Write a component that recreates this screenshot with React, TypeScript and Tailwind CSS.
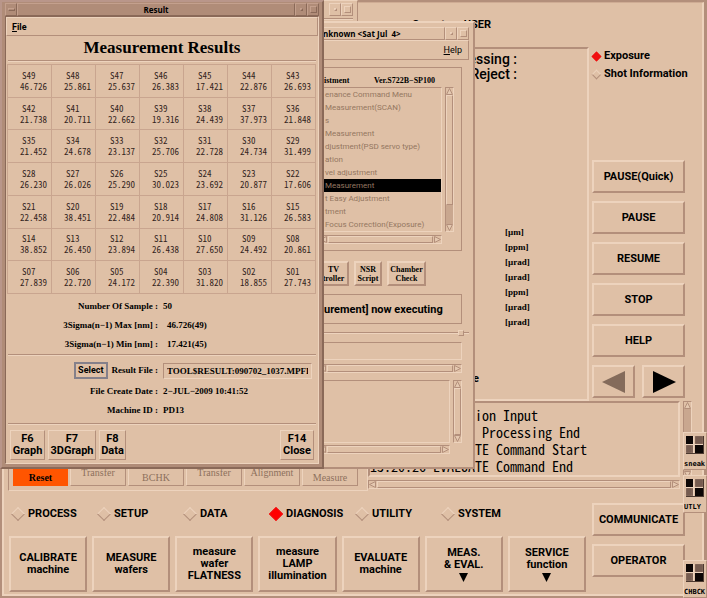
import type { ReactNode } from 'react';

const raised =
  'border-2 border-t-[#edd3bd] border-l-[#edd3bd] border-r-[#b38f7b] border-b-[#b38f7b]';
const raisedThin =
  'border border-t-[#edd3bd] border-l-[#edd3bd] border-r-[#b38f7b] border-b-[#b38f7b]';
const sunken =
  'border border-t-[#b38f7b] border-l-[#b38f7b] border-r-[#edd3bd] border-b-[#edd3bd]';
const framed = 'border border-[#b38f7b]';
const etched = 'border-t border-t-[#b38f7b] border-b border-b-[#edd3bd]';

const sans = "font-['Roboto','Liberation_Sans',sans-serif]";
const serif = "font-['Liberation_Serif','Times_New_Roman',serif]";
const mono = "font-['Noto_Sans_Mono_CJK_JP','Noto_Sans_CJK_JP',monospace]";

const samples = [
  ['46.726', '25.861', '25.637', '26.383', '17.421', '22.876', '26.693'],
  ['21.738', '20.711', '22.662', '19.316', '24.439', '37.973', '21.848'],
  ['21.452', '24.678', '23.137', '25.706', '22.728', '24.734', '31.499'],
  ['26.230', '26.026', '25.290', '30.023', '23.692', '20.877', '17.606'],
  ['22.458', '38.451', '22.484', '20.914', '24.808', '31.126', '26.583'],
  ['38.852', '26.450', '23.894', '26.438', '27.650', '24.492', '20.861'],
  ['27.839', '22.720', '24.172', '22.390', '31.820', '18.855', '27.743'],
];

const commands = [
  'enance Command Menu',
  'Measurement(SCAN)',
  's',
  'Measurement',
  'djustment(PSD servo type)',
  'ation',
  'vel adjustment',
  'Measurement',
  't Easy Adjustment',
  'tment',
  'Focus Correction(Exposure)',
];

const units = ['[µm]', '[ppm]', '[µrad]', '[µrad]', '[ppm]', '[µrad]', '[µrad]'];

const tasks = [
  { lines: ['CALIBRATE', 'machine'] },
  { lines: ['MEASURE', 'wafers'] },
  { lines: ['measure', 'wafer', 'FLATNESS'] },
  { lines: ['measure', 'LAMP', 'illumination'] },
  { lines: ['EVALUATE', 'machine'] },
  { lines: ['MEAS.', '& EVAL.'], more: true },
  { lines: ['SERVICE', 'function'], more: true },
];

const menus = ['PROCESS', 'SETUP', 'DATA', 'DIAGNOSIS', 'UTILITY', 'SYSTEM'];

function Lines({ lines }: { lines: string[] }) {
  return (
    <>
      {lines.map((line) => (
        <span key={line} className="block">
          {line}
        </span>
      ))}
    </>
  );
}

function HScroll({ className = '' }: { className?: string }) {
  return (
    <div className={`flex h-[9px] items-stretch gap-px ${sunken} ${className}`}>
      <svg viewBox="0 0 7 7" className="w-[7px]">
        <path d="M6.5 .5L.5 3.5l6 3z" fill="#e4c8b0" stroke="#b38f7b" />
      </svg>
      <div className={`flex-1 ${raisedThin}`} />
      <svg viewBox="0 0 7 7" className="w-[7px]">
        <path d="M.5 .5l6 3-6 3z" fill="#e4c8b0" stroke="#b38f7b" />
      </svg>
    </div>
  );
}

function VScroll({ thumb = 'flex-1', className = '' }: { thumb?: string; className?: string }) {
  return (
    <div className={`flex w-[9px] shrink-0 flex-col bg-[#c9a78f] ${sunken} ${className}`}>
      <svg viewBox="0 0 7 7" className="h-[7px] bg-[#dfc0a6]">
        <path d="M.5 6.5L3.5 .5l3 6z" fill="#e4c8b0" stroke="#b38f7b" />
      </svg>
      <div className={`bg-[#dfc0a6] ${thumb} ${raisedThin}`} />
      <svg viewBox="0 0 7 7" className="mt-auto h-[7px] bg-[#dfc0a6]">
        <path d="M.5 .5h6l-3 6z" fill="#e4c8b0" stroke="#b38f7b" />
      </svg>
    </div>
  );
}

function WindowButtons({ dark = false }: { dark?: boolean }) {
  const tone = dark
    ? 'border border-t-[#c4a08d] border-l-[#c4a08d] border-r-[#8a6958] border-b-[#8a6958]'
    : raisedThin;
  return (
    <>
      <button aria-label="Minimize" className={`flex w-[12px] items-center justify-center ${tone}`}>
        <span className={`size-[3px] ${tone}`} />
      </button>
      <button aria-label="Maximize" className={`flex w-[12px] items-center justify-center ${tone}`}>
        <span className={`size-[7px] ${tone}`} />
      </button>
    </>
  );
}

function SideButton({ children }: { children: ReactNode }) {
  return (
    <button className={`h-[33px] w-full whitespace-nowrap text-[11px] leading-[14px] font-bold ${raised}`}>
      {children}
    </button>
  );
}

function DesktopIcon({ label }: { label: string }) {
  return (
    <button
      className={`flex h-[38px] w-[24px] flex-col items-start justify-between overflow-hidden bg-[#dfc0a6] pt-[3px] ${raisedThin}`}
    >
      <svg viewBox="0 0 18 18" className="ml-[2px] size-[18px]">
        <path d="M0 0h7v8H0zM9 9h8v8H9z" fill="#0c0605" />
        <path d="M9 0h8v8H9zM0 9h7v8H0z" fill="#8b6f60" />
        <path d="M9 2h8M9 4h8M9 6h8M0 11h7M0 13h7M0 15h7M11 0v8M13 0v8M15 0v8M2 9v8M4 9v8" stroke="#5c473c" strokeWidth=".5" />
        <path d="M7.500 0v18M0 8.500h18" stroke="#edd3bd" fill="none" />
        <path d="M17.500 0v18M0 17.500h18" stroke="#4d3a30" fill="none" />
      </svg>
      <span className="font-['DejaVu_Sans_Mono',monospace] text-[7px] leading-[10px] font-bold">{label}</span>
    </button>
  );
}

function ResultWindow() {
  return (
    <section
      className={`absolute top-0 left-0 w-[324px] border-2 border-t-[#b9968a] border-l-[#b9968a] border-r-[#8a6958] border-b-[#8a6958] bg-[#b08c78] p-[3px] pt-px ${serif}`}
    >
      <header className="flex h-[13px]">
        <button
          aria-label="Window menu"
          className="flex w-[12px] items-center justify-center border border-t-[#c4a08d] border-l-[#c4a08d] border-r-[#8a6958] border-b-[#8a6958]"
        >
          <span className="h-[3px] w-[7px] border border-t-[#c4a08d] border-l-[#c4a08d] border-r-[#8a6958] border-b-[#8a6958]" />
        </button>
        <h2 className="flex-1 border border-t-[#c4a08d] border-l-[#c4a08d] border-r-[#8a6958] border-b-[#8a6958] text-center font-['Open_Sans',sans-serif] text-[8px] leading-[11px] font-bold">
          Result
        </h2>
        <WindowButtons dark />
      </header>

      <div className="border border-t-[#8a6958] border-l-[#8a6958] border-r-[#edd3bd] border-b-[#edd3bd] bg-[#dfc0a6]">
        <nav className={`flex h-[19px] items-center pl-[5px] ${raisedThin}`}>
          <button className={`text-[9px] leading-[12px] font-bold ${sans}`}>
            <u>F</u>ile
          </button>
        </nav>
        <h1 className="h-[24px] text-center text-[17px] leading-[24px] font-bold">Measurement Results</h1>

        <div className={`mx-[2px] ${etched}`} />
        <table
          className={`mt-[2px] ml-px h-[230px] w-[309px] table-fixed border-collapse border border-[#c9a58f] text-[9px] leading-[11px] text-[#33241c] ${mono}`}
        >
          <tbody>
            {samples.map((row, r) => (
              <tr key={r}>
                {row.map((value, c) => (
                  <td key={c} className="border border-[#c9a58f] pl-[12px] text-left align-middle">
                    <span className="block pl-[2px]">S{String(49 - r * 7 - c).padStart(2, '0')}</span>
                    <span className="block">{value}</span>
                  </td>
                ))}
              </tr>
            ))}
          </tbody>
        </table>

        <dl className="grid grid-cols-[152px_1fr] gap-x-[5px] pt-[3px] text-[9px] leading-[19px] font-bold">
          <dt className="text-right">Number Of Sample :</dt>
          <dd>50</dd>
          <dt className="text-right">3Sigma(n−1) Max [nm] :</dt>
          <dd className="pl-[4px]">46.726(49)</dd>
          <dt className="text-right">3Sigma(n−1) Min [nm] :</dt>
          <dd className="pl-[4px]">17.421(45)</dd>
        </dl>
        <div className={`mx-[2px] ${etched}`} />

        <div className="grid grid-cols-[152px_1fr] items-center gap-x-[5px] pt-[5px] text-[9px] leading-[19px] font-bold">
          <div className="flex items-center justify-end gap-[4px]">
            <button
              className={`h-[17px] border-2 border-[#85808a] px-[2px] text-[9px] leading-[13px] font-bold ${sans}`}
            >
              Select
            </button>
            <label htmlFor="result-file">Result File :</label>
          </div>
          <input
            id="result-file"
            defaultValue="TOOL$RESULT:090702_1037.MPFF"
            className={`mr-[6px] h-[16px] min-w-0 px-[3px] text-[9px] leading-[13px] font-bold ${sunken}`}
          />
          <span className="pt-[2px] text-right">File Create Date :</span>
          <span className="pt-[2px]">2−JUL−2009 10:41:52</span>
          <span className="text-right">Machine ID :</span>
          <span>PD13</span>
        </div>
        <div className={`mx-[2px] mt-[3px] ${etched}`} />

        <footer className={`flex gap-[3px] px-[4px] pt-[5px] pb-[3px] text-[11px] leading-[12px] font-bold ${sans}`}>
          <button className={`h-[30px] w-[35px] ${raisedThin}`}>
            <Lines lines={['F6', 'Graph']} />
          </button>
          <button className={`h-[30px] w-[48px] ${raisedThin}`}>
            <Lines lines={['F7', '3DGraph']} />
          </button>
          <button className={`h-[30px] w-[27px] ${raisedThin}`}>
            <Lines lines={['F8', 'Data']} />
          </button>
          <button className={`ml-auto h-[30px] w-[34px] ${raisedThin}`}>
            <Lines lines={['F14', 'Close']} />
          </button>
        </footer>
      </div>
    </section>
  );
}

function MaintenanceWindow() {
  return (
    <section
      className={`absolute top-[21px] left-[316px] w-[159px] overflow-hidden bg-[#dfc0a6] pt-[4px] pr-[4px] pb-[13px] ${raised}`}
    >
      <header className="flex h-[13px]">
        <h2 className={`flex-1 pl-[4px] font-['Open_Sans',sans-serif] text-[8px] leading-[11px] font-bold whitespace-pre ${raisedThin}`}>
          nknown &lt;Sat Jul  4&gt;
        </h2>
        <WindowButtons />
      </header>
      <nav className={`flex h-[20px] items-center justify-end pr-[6px] ${raisedThin}`}>
        <button className={`text-[9px] leading-[12px] ${sans}`}>
          <u>H</u>elp
        </button>
      </nav>

      <div className="pr-[7px]">
        <div className={`mt-[7px] h-[184px] pt-[6px] pr-[7px] ${framed}`}>
          <div className={`flex justify-between pr-[19px] pl-[5px] text-[8px] leading-[13px] font-bold ${serif}`}>
            <span>istment</span>
            <span>Ver.S722B−SP100</span>
          </div>
          <div className="flex gap-[3px]">
            <ul className={`h-[145px] flex-1 text-[8px] leading-[13px] whitespace-nowrap text-[#947761] ${sunken} ${sans}`}>
              {commands.map((command, i) => (
                <li key={i} className={i === 7 ? 'h-[13px] bg-black pl-[5px]' : 'h-[13px] pl-[5px]'}>
                  {command}
                </li>
              ))}
            </ul>
            <VScroll thumb="h-[110px]" />
          </div>
          <HScroll className="mt-[3px] mr-[12px]" />
        </div>

        <div className={`mt-[10px] flex gap-[5px] text-[8px] leading-[9px] font-bold ${serif}`}>
          <button className={`h-[25px] w-[31px] ${raised}`}>
            <Lines lines={['TV', 'troller']} />
          </button>
          <button className={`h-[25px] w-[28px] ${raised}`}>
            <Lines lines={['NSR', 'Script']} />
          </button>
          <button className={`h-[25px] w-[39px] ${raised}`}>
            <Lines lines={['Chamber', 'Check']} />
          </button>
        </div>

        <p className={`mt-[8px] h-[30px] pl-[5px] text-[11px] leading-[29px] font-bold whitespace-nowrap ${framed} ${sans}`}>
          urement] now executing
        </p>
      </div>

      <div className="flex h-[18px] items-center">
        <div className={`flex-1 ${etched}`} />
        <div className={`size-[6px] bg-[#dfc0a6] ${raisedThin}`} />
        <div className={`w-[5px] ${etched}`} />
      </div>
      <div className="pr-[7px]">
        <div className={`h-[18px] ${sunken}`} />
        <HScroll className="mt-[4px]" />
        <div className="mt-[7px] flex gap-[3px]">
          <div className="flex-1">
            <div className={`h-[63px] ${sunken}`} />
            <HScroll className="mt-[2px]" />
          </div>
          <VScroll className="h-[63px]" />
        </div>
      </div>
    </section>
  );
}

function WaferStrip() {
  const cells = [
    { label: 'Transfer', pad: 'pb-[7px]' },
    { label: 'BCHK', pad: 'pb-[2px]' },
    { label: 'Transfer', pad: 'pb-[7px]' },
    { label: 'Alignment', pad: 'pb-[7px]' },
    { label: 'Measure', pad: 'pb-[2px]' },
  ];
  return (
    <div className={`flex w-[360px] gap-[2px] pt-[50px] pb-[4px] pl-[4px] ${sunken} ${serif}`}>
      <button className="flex w-[55px] flex-col items-center justify-end bg-[#ff5500] pb-[3px] text-[10px] leading-[10px] font-bold">
        Reset
      </button>
      {cells.map((cell, i) => (
        <button
          key={i}
          disabled
          className={`flex w-[56px] flex-col items-center justify-end text-[10px] leading-[10px] text-[#8d705d] ${raisedThin} ${cell.pad}`}
        >
          {cell.label}
        </button>
      ))}
    </div>
  );
}

export default function App() {
  return (
    <main className={`relative flex min-h-screen flex-col overflow-hidden bg-[#dfc0a6] text-black ${sans}`}>
      <div className="flex flex-1 flex-col border-2 border-r-[3px] border-[#b38f7b]">
        <div className="flex flex-1 flex-col border-t border-r-2 border-b-2 border-l-2 border-t-[#cfac94] border-r-[#edd3bd] border-b-[#edd3bd] border-l-[#edd3bd]">
          <div className="flex flex-1">
            {/* Process status */}
            <div className="flex flex-1 flex-col">
              <p className="h-[44px] pr-[98px] text-right text-[11px] leading-[43px] font-bold">Operator : USER</p>
              <div className="flex flex-1 flex-col border-t-2 border-r-2 border-b-2 border-t-[#b38f7b] border-r-[#edd3bd] border-b-[#edd3bd]">
                <p className="pt-[3px] pr-[70px] text-right text-[14px] leading-[15px] font-medium">
                  <span className="block">Processing :</span>
                  <span className="block">Reject :</span>
                </p>
                <ul className={`mt-[143px] ml-auto w-[82px] text-[9px] leading-[15px] font-bold ${serif}`}>
                  {units.map((unit, i) => (
                    <li key={i}>{unit}</li>
                  ))}
                </ul>
                <p className="mt-[42px] pr-[108px] text-right text-[11px] leading-[14px] font-bold">Mode</p>
              </div>
            </div>

            {/* Operator controls */}
            <div className="flex w-[113px] flex-col pr-[17px] pl-[3px]">
              <div className="pt-[44px] text-[11px] leading-[18px] font-bold whitespace-nowrap">
                <label className="flex items-center gap-[4px]">
                  <input
                    type="radio"
                    name="view"
                    defaultChecked
                    className={`ml-px size-[7px] shrink-0 rotate-45 appearance-none checked:border-[#f01010] checked:bg-[#f01010] ${raisedThin}`}
                  />
                  Exposure
                </label>
                <label className="flex items-center gap-[4px]">
                  <input
                    type="radio"
                    name="view"
                    className={`ml-px size-[7px] shrink-0 rotate-45 appearance-none checked:border-[#f01010] checked:bg-[#f01010] ${raisedThin}`}
                  />
                  Shot Information
                </label>
              </div>
              <div className="mt-[77px] flex flex-col gap-[8px]">
                <SideButton>PAUSE(Quick)</SideButton>
                <SideButton>PAUSE</SideButton>
                <SideButton>RESUME</SideButton>
                <SideButton>STOP</SideButton>
                <SideButton>HELP</SideButton>
                <div className="flex justify-between">
                  <button aria-label="Previous" className={`flex h-[33px] w-[43px] items-center justify-center ${raised}`}>
                    <svg viewBox="0 0 24 24" className="size-[24px]">
                      <path d="M0 12L23 1v22z" fill="#846b5b" />
                    </svg>
                  </button>
                  <button aria-label="Next" className={`flex h-[33px] w-[43px] items-center justify-center ${raised}`}>
                    <svg viewBox="0 0 24 24" className="size-[24px]">
                      <path d="M24 12L1 1v22z" fill="#000" />
                    </svg>
                  </button>
                </div>
              </div>
            </div>
          </div>

          {/* Log */}
          <div className="flex h-[90px] pr-[10px] pl-[4px]">
            <WaferStrip />
            <div className="flex min-w-0 flex-1 gap-[3px]">
              <div className="min-w-0 flex-1">
                <pre
                  className={`h-[76px] overflow-hidden border-2 border-t-[#b38f7b] border-l-[#b38f7b] border-r-[#edd3bd] border-b-[#edd3bd] pt-[4px] text-[14px] leading-[17px] ${mono}`}
                >
                  {'               ion Input\n'}
                  {'                Processing End\n'}
                  {'13:20:26 EVALUATE Command Start\n'}
                  {'13:20:26 EVALUATE Command End'}
                </pre>
                <HScroll className="mt-[3px]" />
              </div>
              <VScroll thumb="mt-auto h-[12px]" className="h-[78px]" />
            </div>
          </div>

          {/* Task menu */}
          <div className="flex pt-[11px] pr-[17px] pb-[2px] pl-[5px]">
            <div className="flex-1">
              <div className="flex h-[23px] items-center text-[11px] leading-[14px] font-bold">
                {menus.map((menu) => (
                  <label key={menu} className="flex w-[86px] items-center gap-[5px] whitespace-nowrap">
                    <input
                      type="radio"
                      name="menu"
                      defaultChecked={menu === 'DIAGNOSIS'}
                      className={`ml-[4px] size-[10px] shrink-0 rotate-45 appearance-none checked:border-[#f01010] checked:bg-[#ff0000] ${raisedThin}`}
                    />
                    {menu}
                  </label>
                ))}
              </div>
              <div className="mt-[11px] grid grid-cols-7 gap-[5px]">
                {tasks.map((task) => (
                  <button
                    key={task.lines.join(' ')}
                    className={`h-[56px] text-[11px] leading-[12px] font-bold whitespace-nowrap ${raised}`}
                  >
                    <Lines lines={task.lines} />
                    {task.more && (
                      <svg viewBox="0 0 9 9" className="mx-auto mt-[2px] size-[9px]">
                        <path d="M0 0h9L4.500 9z" />
                      </svg>
                    )}
                  </button>
                ))}
              </div>
            </div>
            <div className="ml-[6px] flex w-[93px] flex-col gap-[8px] pt-px">
              <SideButton>COMMUNICATE</SideButton>
              <SideButton>OPERATOR</SideButton>
            </div>
          </div>
        </div>
      </div>

      {/* Iconified windows */}
      <div className="absolute right-0 bottom-0 flex flex-col">
        <DesktopIcon label="sneak" />
        <div className="h-[5px]" />
        <DesktopIcon label="UTLY" />
        <div className="h-[47px]" />
        <DesktopIcon label="CHBCK" />
      </div>

      <section className={`absolute top-0 left-[300px] h-[30px] w-[58px] bg-[#dfc0a6] pt-[2px] pr-[4px] ${raisedThin}`}>
        <header className="flex h-[13px] justify-end">
          <WindowButtons />
        </header>
        <div className={`mt-[2px] ${etched}`} />
      </section>
      <MaintenanceWindow />
      <ResultWindow />
    </main>
  );
}
